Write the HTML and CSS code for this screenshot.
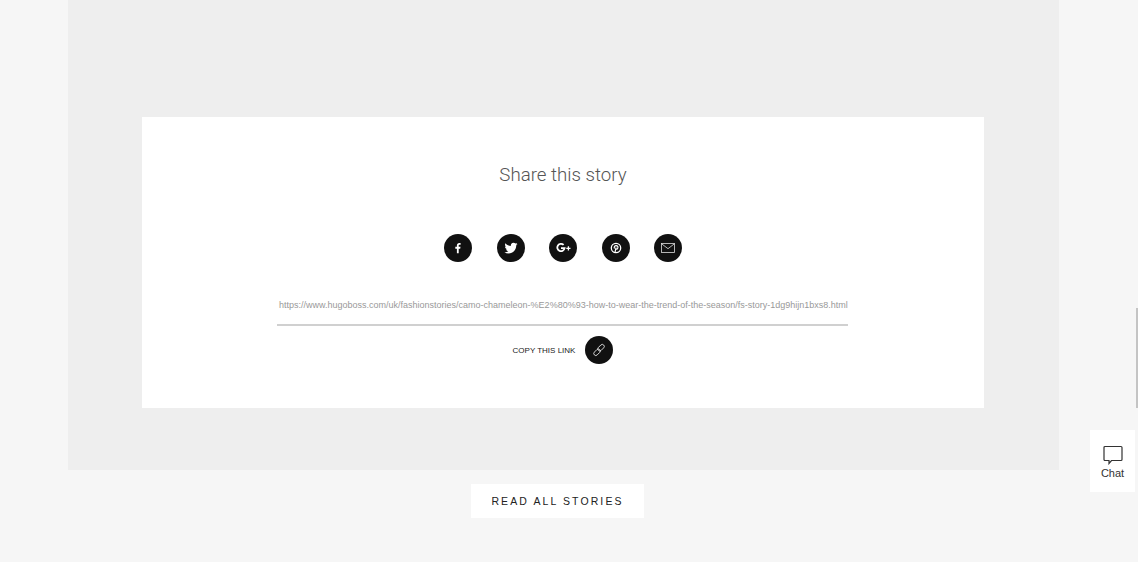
FILE: index.html
```html
<!DOCTYPE html>
<html lang="en">
<head>
<meta charset="utf-8">
<title>Share this story</title>
<link rel="stylesheet" href="styles.css">
</head>
<body>
<main class="page">
  <section class="panel">
    <div class="card">
      <h2 class="title">Share this story</h2>
      <div class="socials">
        <a class="round" aria-label="Facebook"><svg width="28" height="28" viewBox="0 0 28 28"><path fill="#fff" d="M14.700 19.200v-4.500h1.500l.3-1.900h-1.800v-1.100c0-.6.200-.9.900-.9h1V9c-.3 0-.8-.1-1.300-.1-1.500 0-2.400.9-2.400 2.400v1.500h-1.600v1.900h1.600v4.500z"/></svg></a>
        <a class="round" aria-label="Twitter"><svg width="28" height="28" viewBox="0 0 28 28"><path fill="#fff" d="M20.500 10c-.5.200-1 .4-1.500.4.500-.3 1-.8 1.200-1.400-.5.300-1.100.5-1.700.6a2.700 2.700 0 0 0-4.600 2.500c-2.200-.1-4.200-1.200-5.500-2.800-.7 1.200-.4 2.800.8 3.600-.4 0-.8-.1-1.200-.3 0 1.300.9 2.400 2.100 2.700-.4.100-.8.100-1.200 0 .3 1.100 1.300 1.800 2.500 1.900-1.100.9-2.600 1.300-4 1.100 1.200.8 2.600 1.200 4.100 1.200 5 0 7.800-4.200 7.700-8 .5-.4 1-.9 1.300-1.500z"/></svg></a>
        <a class="round" aria-label="Google Plus"><svg width="28" height="28" viewBox="0 0 28 28"><path fill="none" stroke="#fff" stroke-width="1.800" d="M14.600 10.900a3.700 3.700 0 1 0 1 3.300H12"/><path fill="none" stroke="#fff" stroke-width="1.300" d="M17.300 14.300h4.200M19.400 12.200v4.200"/></svg></a>
        <a class="round" aria-label="Pinterest"><svg width="28" height="28" viewBox="0 0 28 28"><circle cx="14" cy="14" r="4.700" fill="none" stroke="#fff" stroke-width="1.300"/><path fill="none" stroke="#fff" stroke-width="1.200" d="M13 18.500l1-5M12.500 14.500c-.8-1.600.2-2.800 1.600-2.800 1.500 0 2.200 1.100 1.700 2.400-.4 1.100-1.500 1.400-2.300.7"/></svg></a>
        <a class="round" aria-label="Email"><svg width="28" height="28" viewBox="0 0 28 28"><rect x="7.500" y="9.500" width="13" height="9" fill="none" stroke="#ddd" stroke-width=".8"/><path fill="none" stroke="#ddd" stroke-width=".8" d="M7.500 9.700l6.500 5 6.500-5"/></svg></a>
      </div>
      <div class="url">https://www.hugoboss.com/uk/fashionstories/camo-chameleon-%E2%80%93-how-to-wear-the-trend-of-the-season/fs-story-1dg9hijn1bxs8.html</div>
      <div class="copy">
        <span class="copy-label">COPY THIS LINK</span>
        <a class="round" aria-label="Copy link"><svg width="28" height="28" viewBox="0 0 28 28"><g fill="none" stroke="#ddd" stroke-width=".9"><rect x="8.300" y="14.300" width="7.500" height="4" rx="2" transform="rotate(-45 12 16.300)"/><rect x="12.300" y="9.700" width="7.500" height="4" rx="2" transform="rotate(-45 16 11.700)"/></g></svg></a>
      </div>
    </div>
  </section>
  <a class="read-all">READ ALL STORIES</a>
</main>
<div class="scroll-thumb"></div>
<aside class="chat">
  <svg width="20" height="20" viewBox="0 0 20 20"><path fill="none" stroke="#333" stroke-width="1.200" d="M2 1.500h16a1 1 0 0 1 1 1v12a1 1 0 0 1-1 1H8.500L6 18.500v-3H2a1 1 0 0 1-1-1v-12a1 1 0 0 1 1-1z"/></svg>
  <span>Chat</span>
</aside>
</body>
</html>
```
FILE: styles.css
```css
html, body {
  margin: 0;
  height: 100%;
  overflow: hidden;
}
body {
  background: #f6f6f6;
  font-family: "Liberation Sans", Arial, sans-serif;
}
.page {
  display: flex;
  flex-direction: column;
  height: 562px;
}
.panel {
  box-sizing: border-box;
  width: 991px;
  height: 470px;
  margin-left: 68px;
  padding: 117px 75px 0 74px;
  background: #eeeeee;
}
.card {
  display: flex;
  flex-direction: column;
  align-items: center;
  height: 291px;
  background: #fff;
}
.title {
  margin: 46px 0 0;
  font-family: Roboto, "Liberation Sans", sans-serif;
  font-weight: 300;
  font-size: 18.700px;
  line-height: 24px;
  color: #555;
}
.socials {
  display: flex;
  gap: 24.500px;
  margin-top: 47px;
}
.round {
  display: block;
  width: 28px;
  height: 28px;
  border-radius: 50%;
  background: #111;
}
.round svg {
  display: block;
}
.url {
  box-sizing: border-box;
  width: 571px;
  margin: 37px 1px 0 0;
  padding: 0 0 13px 2px;
  border-bottom: 2px solid #d0d0d0;
  font-size: 9px;
  line-height: 12px;
  color: #999;
  white-space: nowrap;
}
.copy {
  display: flex;
  align-items: center;
  gap: 10px;
  margin-top: 10px;
}
.copy-label {
  font-size: 8px;
  color: #222;
}
.read-all {
  box-sizing: border-box;
  width: 173px;
  height: 34px;
  margin: 14px 0 0 471px;
  background: #fff;
  color: #222;
  font-size: 10.500px;
  line-height: 34px;
  letter-spacing: 2.100px;
  text-align: center;
}
.scroll-thumb {
  position: fixed;
  top: 308px;
  right: 0;
  width: 2px;
  height: 100px;
  background: #c4c4c4;
}
.chat {
  position: fixed;
  top: 430px;
  left: 1090px;
  width: 45px;
  height: 62px;
  display: flex;
  flex-direction: column;
  align-items: center;
  padding-top: 15px;
  box-sizing: border-box;
  background: #fff;
  color: #333;
  font-family: "Liberation Sans", Arial, sans-serif;
  font-size: 11px;
}
.chat span {
  margin-top: 2px;
}
```
